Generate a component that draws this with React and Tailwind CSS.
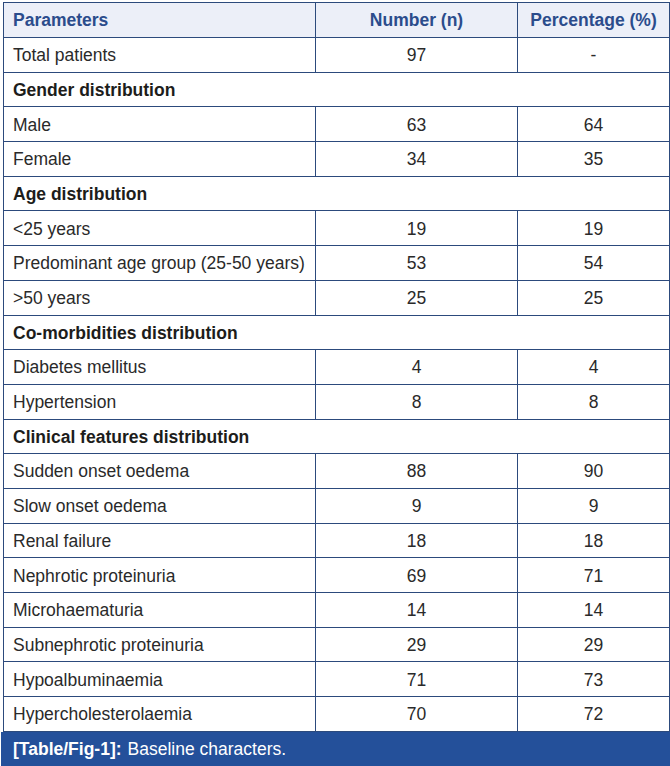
import React from "react";

const rows = [
  ["Total patients", "97", "-"],
  ["Gender distribution"],
  ["Male", "63", "64"],
  ["Female", "34", "35"],
  ["Age distribution"],
  ["<25 years", "19", "19"],
  ["Predominant age group (25-50 years)", "53", "54"],
  [">50 years", "25", "25"],
  ["Co-morbidities distribution"],
  ["Diabetes mellitus", "4", "4"],
  ["Hypertension", "8", "8"],
  ["Clinical features distribution"],
  ["Sudden onset oedema", "88", "90"],
  ["Slow onset oedema", "9", "9"],
  ["Renal failure", "18", "18"],
  ["Nephrotic proteinuria", "69", "71"],
  ["Microhaematuria", "14", "14"],
  ["Subnephrotic proteinuria", "29", "29"],
  ["Hypoalbuminaemia", "71", "73"],
  ["Hypercholesterolaemia", "70", "72"],
];

export default function App() {
  return (
    <div
      className="w-[670px] h-[766px] bg-white overflow-hidden text-[17.5px] text-[#2a2a2a]"
      style={{ fontFamily: '"Liberation Sans", Arial, sans-serif' }}
    >
      <div className="pl-[3px] pr-[1px] pt-[2px]">
        <table className="border-collapse table-fixed w-[666px]">
          <colgroup>
            <col className="w-[312px]" />
            <col className="w-[202px]" />
            <col className="w-[152px]" />
          </colgroup>
          <thead>
            <tr className="h-[35px] bg-[#eceff8] text-[#2b4c8c] font-bold">
              <td className="border border-[#2c4a7c] pl-[9px] pt-[1px] text-left">Parameters</td>
              <td className="border border-[#2c4a7c] pt-[1px] text-center">Number (n)</td>
              <td className="border border-[#2c4a7c] pt-[1px] text-center">Percentage (%)</td>
            </tr>
          </thead>
          <tbody>
            {rows.map((r, i) =>
              r.length === 1 ? (
                <tr key={i} className="h-[34.7px]">
                  <td colSpan={3} className="border border-[#2c4a7c] pl-[9px] pt-[1px] font-bold text-[#1d1d1b]">
                    {r[0]}
                  </td>
                </tr>
              ) : (
                <tr key={i} className="h-[34.7px]">
                  <td className="border border-[#2c4a7c] pl-[9px] pt-[1px]">{r[0]}</td>
                  <td className="border border-[#2c4a7c] pt-[1px] text-center">{r[1]}</td>
                  <td className="border border-[#2c4a7c] pt-[1px] text-center">{r[2]}</td>
                </tr>
              )
            )}
          </tbody>
        </table>
      </div>
      <div className="ml-[1px] h-[36px] bg-[#24509a] text-white flex items-center pl-[12px] pb-[2px]">
        <span className="font-bold">[Table/Fig-1]:</span>
        <span className="ml-[6px]">Baseline characters.</span>
      </div>
    </div>
  );
}
